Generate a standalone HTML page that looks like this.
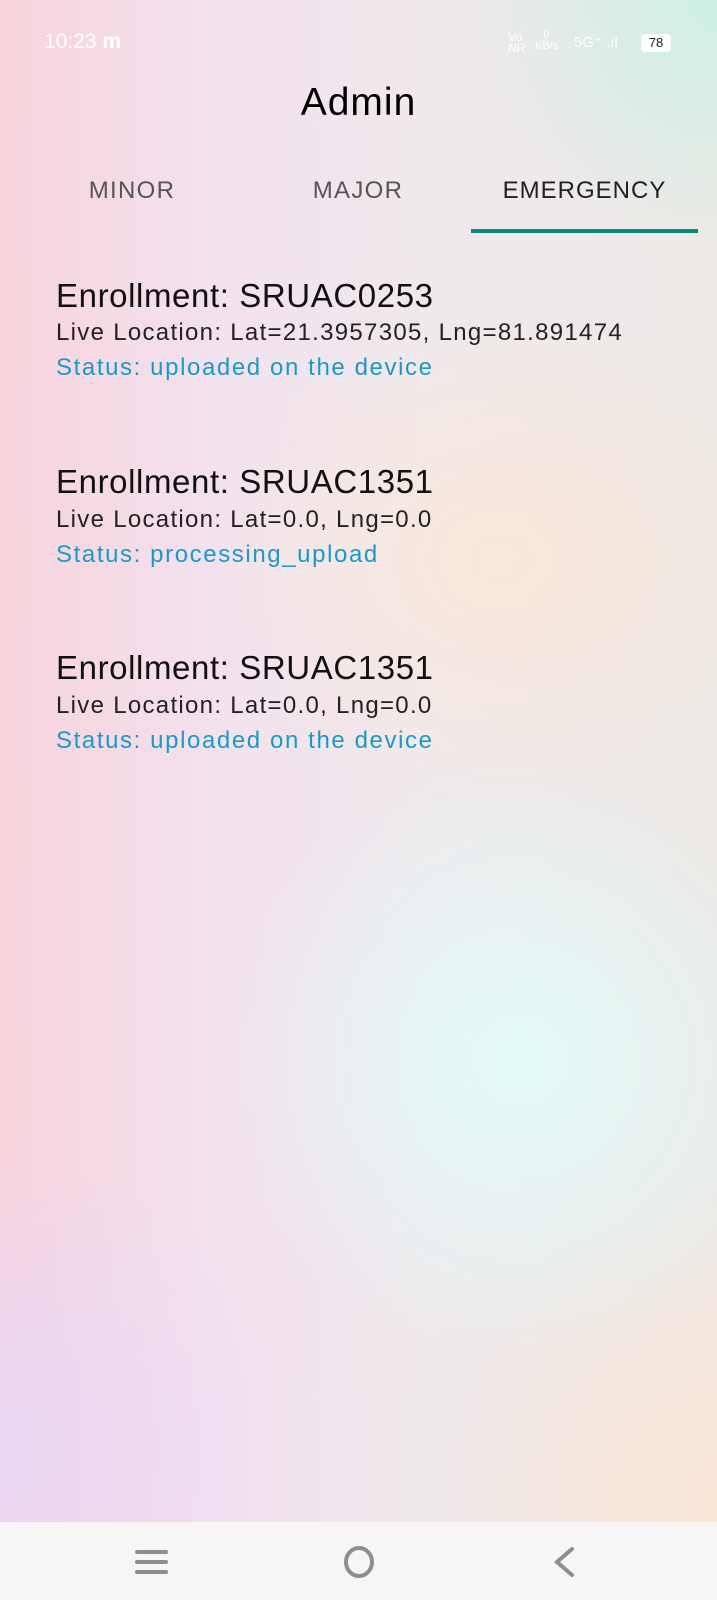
<!DOCTYPE html>
<html><head><meta charset="utf-8"><style>
html,body{margin:0;padding:0}
body{width:717px;height:1600px;position:relative;overflow:hidden;font-family:"Liberation Sans",sans-serif;
background:
radial-gradient(ellipse 300px 300px at 520px 1060px,rgba(225,252,250,0.9),rgba(225,252,250,0) 100%),
radial-gradient(ellipse 300px 250px at 500px 560px,rgba(252,232,215,0.8),rgba(252,232,215,0) 100%),
radial-gradient(ellipse 250px 250px at 717px 0px,rgba(205,240,228,1),rgba(205,240,228,0) 100%),
radial-gradient(ellipse 300px 300px at 717px 1500px,rgba(250,230,215,1),rgba(250,230,215,0) 100%),
radial-gradient(ellipse 300px 300px at 0px 1450px,rgba(232,215,245,1),rgba(232,215,245,0) 100%),
linear-gradient(90deg,#f8d3dc 0%,#f2e2ee 30%,#efe9ec 60%,#ede9e6 100%);}
.t{position:absolute;white-space:nowrap}
.title{font-size:33px;color:#111;letter-spacing:0.6px}
.loc{font-size:24px;color:#222;letter-spacing:1.3px}
.st{font-size:24px;color:#1b9ac6;letter-spacing:1.6px}
.nav{position:absolute;left:0;top:1522px;width:717px;height:78px;background:#f7f5f6}
</style></head><body>
<div class="t" style="left:44px;top:30px;font-size:21px;color:#fff">10:23 <b>m</b></div>
<div class="t" style="left:508px;top:32px;font-size:12px;color:#fff;line-height:11px">Vo<br>NR</div>
<div class="t" style="left:535px;top:30px;font-size:11px;color:#fff;text-align:center;line-height:11px">0<br>KB/s</div>
<div class="t" style="left:574px;top:33px;font-size:15px;color:#fff">5G⁺ .ıl</div>
<div style="position:absolute;left:641px;top:34px;width:30px;height:18px;background:#fff;border-radius:4px;font-size:13px;text-align:center;line-height:18px;color:#222">78</div>
<div class="t" style="left:0;width:717px;text-align:center;top:81px;font-size:39px;color:#000;letter-spacing:1px">Admin</div>
<div class="t" style="left:0;width:264px;text-align:center;top:177px;font-size:24px;color:#555;letter-spacing:1.3px">MINOR</div>
<div class="t" style="left:226px;width:264px;text-align:center;top:177px;font-size:24px;color:#555;letter-spacing:1.3px">MAJOR</div>
<div class="t" style="left:471px;width:227px;text-align:center;top:177px;font-size:24px;color:#222;letter-spacing:1px">EMERGENCY</div>
<div style="position:absolute;left:471px;top:229px;width:227px;height:4px;background:#0c8a78"></div>

<div class="t title" style="left:56px;top:277px">Enrollment: SRUAC0253</div>
<div class="t loc" style="left:56px;top:319px">Live Location: Lat=21.3957305, Lng=81.891474</div>
<div class="t st" style="left:56px;top:354px">Status: uploaded on the device</div>

<div class="t title" style="left:56px;top:463px">Enrollment: SRUAC1351</div>
<div class="t loc" style="left:56px;top:506px">Live Location: Lat=0.0, Lng=0.0</div>
<div class="t st" style="left:56px;top:541px">Status: processing_upload</div>

<div class="t title" style="left:56px;top:649px">Enrollment: SRUAC1351</div>
<div class="t loc" style="left:56px;top:692px">Live Location: Lat=0.0, Lng=0.0</div>
<div class="t st" style="left:56px;top:727px">Status: uploaded on the device</div>

<div class="nav"></div>
<svg style="position:absolute;left:0;top:1522px" width="717" height="78">
<g stroke="#8f8d90" stroke-width="4" stroke-linecap="round" fill="none">
<line x1="137" y1="30" x2="166" y2="30"/><line x1="137" y1="40" x2="166" y2="40"/><line x1="137" y1="50" x2="166" y2="50"/>
<ellipse cx="359" cy="40" rx="13" ry="14"/>
<polyline points="572,27 557,40 572,53"/>
</g></svg>
</body></html>
